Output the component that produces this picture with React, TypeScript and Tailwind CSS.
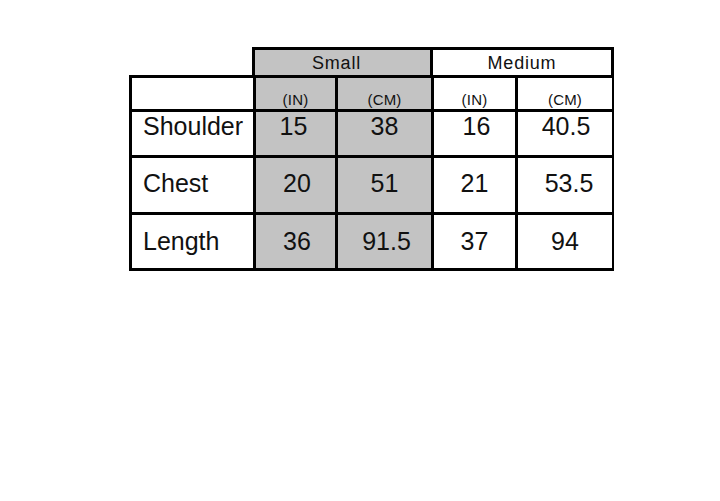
import React from "react";

const G = "bg-[#c3c3c3]";
const W = "bg-white";

function Cell({ bg, children, className = "" }: { bg: string; children?: React.ReactNode; className?: string }) {
  return <div className={`${bg} flex ${className}`}>{children}</div>;
}

export default function App() {
  const font = { fontFamily: '"Liberation Sans", Arial, sans-serif' };
  const rows = [
    {
      label: "Shoulder",
      v: ["15", "38", "16", "40.5"],
      pad: ["pr-[4px]", "", "pl-[4px]", "pl-[2px]"],
      align: "items-start",
      h: "h-[43px]",
    },
    {
      label: "Chest",
      v: ["20", "51", "21", "53.5"],
      pad: ["pl-[3px]", "", "", "pl-[8px]"],
      align: "items-center pb-[4px]",
      h: "h-[54px]",
    },
    {
      label: "Length",
      v: ["36", "91.5", "37", "94"],
      pad: ["pl-[3px]", "pl-[4px]", "", ""],
      align: "items-center pb-[2px]",
      h: "h-[53px]",
    },
  ];
  return (
    <div className="w-[720px] h-[501px] bg-white text-[#111]" style={font}>
      <div className="pt-[47px] pl-[129px]">
        {/* top header */}
        <div className="ml-[123px] w-[362px] bg-black pt-[3px] px-[3px] flex gap-[3px]">
          <div className={`${G} w-[175px] h-[25px] flex items-center justify-center pr-[12px] text-[18px] tracking-[0.8px] leading-none`}>
            Small
          </div>
          <div className={`${W} w-[178px] h-[25px] flex items-center justify-center text-[18px] tracking-[0.8px] leading-none`}>
            Medium
          </div>
        </div>
        {/* main grid */}
        <div className="w-[485px] bg-black p-[3px] grid grid-cols-[121px_79px_93px_81px_94px] gap-[3px]">
          <Cell bg={W} className="h-[31px]" />
          <Cell bg={G} className="h-[31px] items-end justify-center text-[15px] tracking-[0.2px] leading-[17px] pb-[1px]">(IN)</Cell>
          <Cell bg={G} className="h-[31px] items-end justify-center text-[15px] tracking-[0.2px] leading-[17px] pb-[1px]">(CM)</Cell>
          <Cell bg={W} className="h-[31px] items-end justify-center text-[15px] tracking-[0.2px] leading-[17px] pb-[1px]">(IN)</Cell>
          <Cell bg={W} className="h-[31px] items-end justify-center text-[15px] tracking-[0.2px] leading-[17px] pb-[1px]">(CM)</Cell>
          {rows.map((r) => (
            <React.Fragment key={r.label}>
              <Cell bg={W} className={`${r.h} ${r.align} pl-[11px] text-[25px] leading-[28px]`}>{r.label}</Cell>
              {r.v.map((v, i) => (
                <Cell
                  key={i}
                  bg={i < 2 ? G : W}
                  className={`${r.h} ${r.align} ${r.pad[i]} justify-center text-[25px] leading-[28px]`}
                >
                  {v}
                </Cell>
              ))}
            </React.Fragment>
          ))}
        </div>
      </div>
    </div>
  );
}
